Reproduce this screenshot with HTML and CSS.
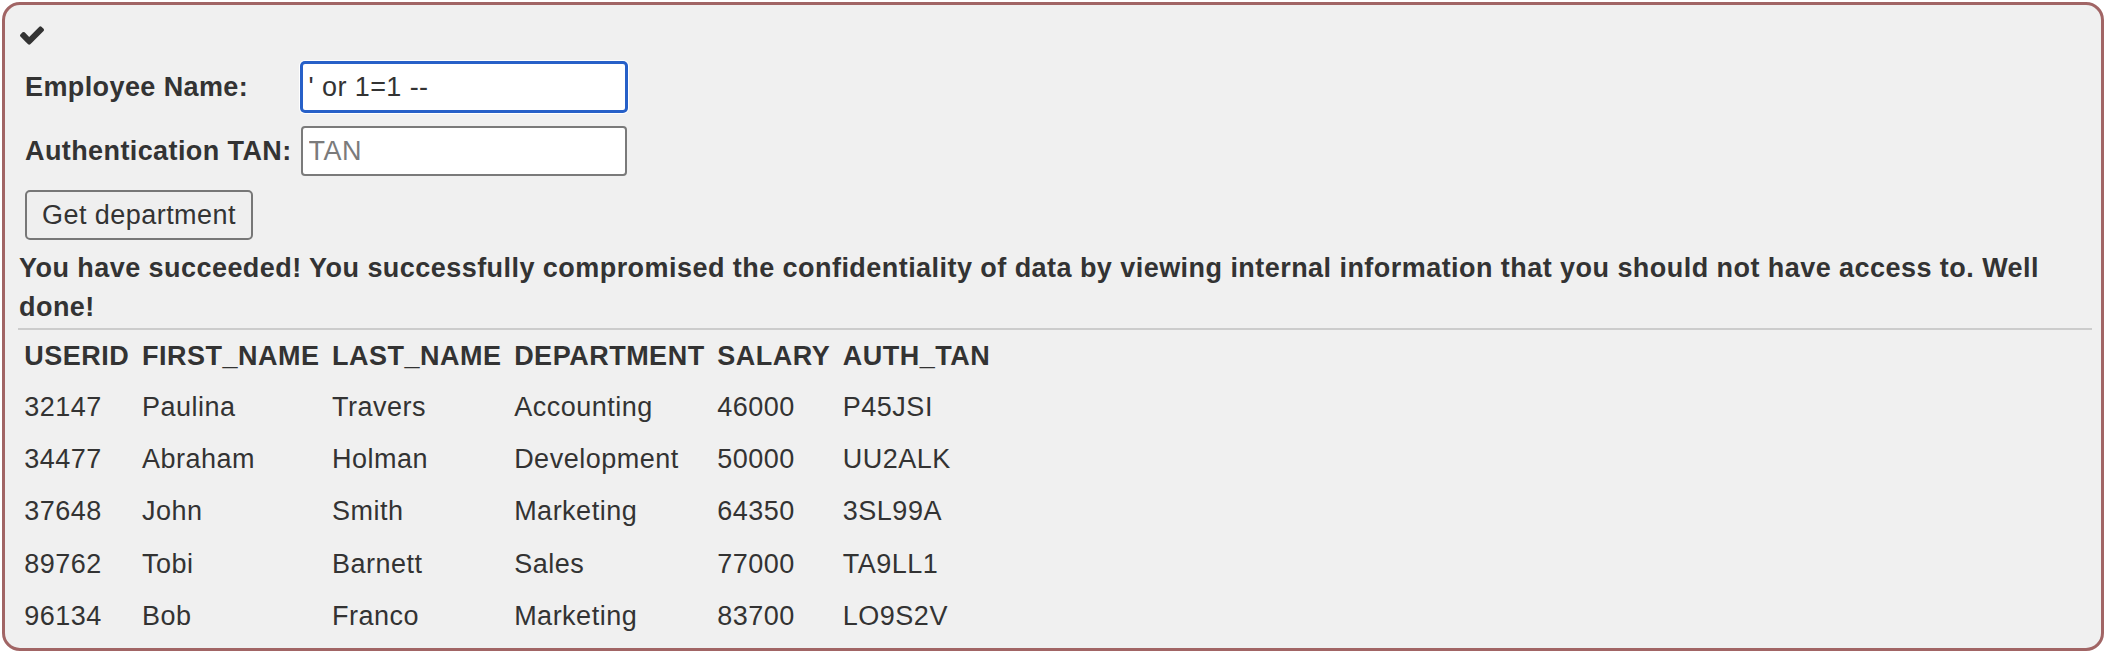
FILE: index.html
```html
<!DOCTYPE html>
<html lang="en">
<head>
<meta charset="utf-8">
<title>SQL Injection</title>
<link rel="stylesheet" href="styles.css">
</head>
<body>
<div class="lesson-box">
  <div class="check-row">
    <svg class="check-icon" viewBox="121 330 1550 1192" aria-hidden="true">
      <path d="M1671 566q0 40-28 68l-724 724-136 136q-28 28-68 28t-68-28l-136-136-362-362q-28-28-28-68t28-68l136-136q28-28 68-28t68 28l294 295 656-657q28-28 68-28t68 28l136 136q28 28 28 68z"/>
    </svg>
  </div>
  <form class="attack-form">
    <table class="form-table">
      <tr>
        <td class="label-cell">Employee Name:</td>
        <td class="input-cell"><input class="text-input focused" type="text" value="' or 1=1 --"></td>
      </tr>
      <tr>
        <td class="label-cell">Authentication TAN:</td>
        <td class="input-cell"><input class="text-input" type="text" placeholder="TAN"></td>
      </tr>
      <tr>
        <td class="button-cell" colspan="2"><button class="submit-btn" type="button">Get department</button></td>
      </tr>
    </table>
  </form>
  <p class="feedback">You have succeeded! You successfully compromised the confidentiality of data by viewing internal information that you should not have access to. Well done!</p>
  <hr class="divider">
  <table class="results">
    <tr><th>USERID</th><th>FIRST_NAME</th><th>LAST_NAME</th><th>DEPARTMENT</th><th>SALARY</th><th>AUTH_TAN</th></tr>
    <tr><td>32147</td><td>Paulina</td><td>Travers</td><td>Accounting</td><td>46000</td><td>P45JSI</td></tr>
    <tr><td>34477</td><td>Abraham</td><td>Holman</td><td>Development</td><td>50000</td><td>UU2ALK</td></tr>
    <tr><td>37648</td><td>John</td><td>Smith</td><td>Marketing</td><td>64350</td><td>3SL99A</td></tr>
    <tr><td>89762</td><td>Tobi</td><td>Barnett</td><td>Sales</td><td>77000</td><td>TA9LL1</td></tr>
    <tr><td>96134</td><td>Bob</td><td>Franco</td><td>Marketing</td><td>83700</td><td>LO9S2V</td></tr>
  </table>
</div>
</body>
</html>
```
FILE: styles.css
```css
html {
  overflow: hidden;
}
body {
  margin: 0;
  background: #ffffff;
  font-family: "Liberation Sans", Arial, Helvetica, sans-serif;
  font-size: 27px;
  line-height: 38.6px;
  letter-spacing: 0.5px;
  color: #333333;
}
.lesson-box {
  margin: 2px 0 0 2px;
  border: 3px solid #a16565;
  border-radius: 18px;
  background: #f0f0f0;
  padding: 11px 9px 6px 13px;
}
.check-row {
  height: 39px;
  display: flex;
  align-items: center;
  padding-left: 2px;
}
.check-icon {
  width: 24px;
  height: 19px;
  fill: #333333;
}
.attack-form {
  margin: 0;
}
.form-table {
  border-collapse: collapse;
}
.form-table td {
  padding: 7px;
  vertical-align: middle;
}
.label-cell {
  font-weight: bold;
  white-space: nowrap;
  letter-spacing: 0.4px;
}
.form-table .label-cell {
  padding-right: 2px;
}
.text-input {
  box-sizing: border-box;
  width: 326px;
  height: 50px;
  border: 2px solid #7a7a7a;
  border-radius: 4px;
  background: #ffffff;
  padding: 0 6px;
  font-family: "Liberation Sans", Arial, Helvetica, sans-serif;
  font-size: 27px;
  letter-spacing: 0.4px;
  color: #333333;
  display: block;
}
.text-input::placeholder {
  color: #7b7b7b;
}
.text-input.focused {
  border-color: #2760c8;
  box-shadow: 0 0 0 1px #2760c8, 0 0 0 2px #ffffff;
  outline: none;
}
.submit-btn {
  display: block;
  box-sizing: border-box;
  height: 50px;
  padding: 0 15px;
  border: 2px solid #777777;
  border-radius: 5px;
  background: #efefef;
  font-family: "Liberation Sans", Arial, Helvetica, sans-serif;
  font-size: 27px;
  letter-spacing: 0.45px;
  color: #333333;
}
.feedback {
  margin: 2px 0 0 1px;
  font-weight: bold;
  letter-spacing: 0.45px;
}
.divider {
  margin: 2px 0 1px 0;
  border: 0;
  border-top: 2px solid #cccccc;
  height: 0;
}
.results {
  border-collapse: collapse;
}
.results th,
.results td {
  padding: 6.5px 6.3px 7px;
  text-align: left;
  white-space: nowrap;
}
.results th {
  font-weight: bold;
  padding-top: 6px;
  padding-bottom: 6px;
}
```
